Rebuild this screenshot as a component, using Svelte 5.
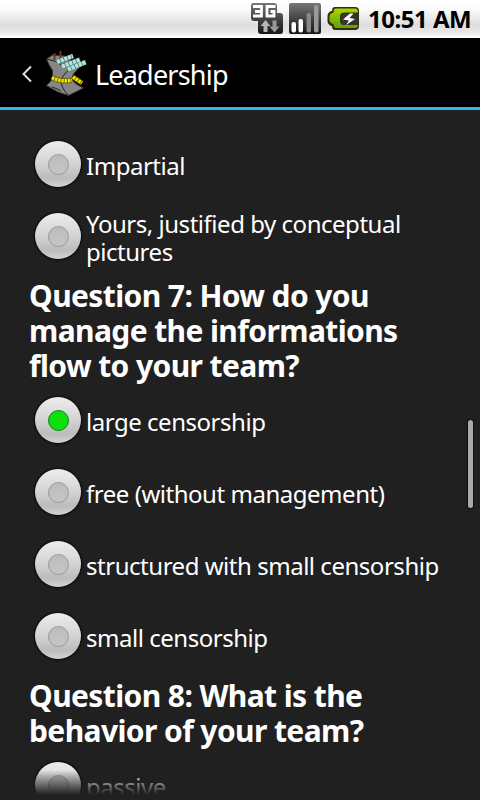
<script>
	const impartial = [
		{ label: ['Impartial'] },
		{ label: ['Yours, justified by conceptual', 'pictures'] }
	];

	const questions = [
		{
			title: ['Question 7: How do you', 'manage the informations', 'flow to your team?'],
			options: [
				{ label: ['large censorship'] },
				{ label: ['free (without management)'] },
				{ label: ['structured with small censorship'] },
				{ label: ['small censorship'] }
			]
		},
		{
			title: ['Question 8: What is the', 'behavior of your team?'],
			options: [{ label: ['passive'] }]
		}
	];

	let selected = 'large censorship';
</script>

{#snippet option(item)}
	<button class="option" on:click={() => (selected = item.label[0])}>
		<span class="radio" class:radio--on={selected === item.label[0]}>
			<span class="radio__dot"></span>
		</span>
		<span class="option__label">
			{#each item.label as line}
				<span class="line">{line}</span>
			{/each}
		</span>
	</button>
{/snippet}

<div class="screen">
	<div class="status">
		<svg class="status__icons" width="110" height="38" viewBox="250 0 110 38">
			<defs>
				<linearGradient id="dark" x1="0" y1="0" x2="0" y2="1">
					<stop offset="0" stop-color="#777" />
					<stop offset=".5" stop-color="#444" />
					<stop offset="1" stop-color="#151515" />
				</linearGradient>
				<linearGradient id="green" x1="0" y1="0" x2="0" y2="1">
					<stop offset="0" stop-color="#a5d800" />
					<stop offset="1" stop-color="#65a000" />
				</linearGradient>
			</defs>
			<path
				d="M253 3h21q3 0 3 3v7h3q3 0 3 3v15q0 3-3 3h-19q-3 0-3-3v-10h-4q-3 0-3-3v-12q0-3 2-3z"
				fill="url(#dark)"
			/>
			<!-- 3G -->
			<path
				d="M253 6.500h8.500v9.500h-8.500M255 11.500h6.500M275.500 6.500h-8.500v9.500h7v-4.500h-3.500"
				fill="none"
				stroke="#fff"
				stroke-width="2.800"
			/>
			<path d="M265.500 20l5 6h-3v6h-4v-6h-3z" fill="#b5b5b5" />
			<path d="M274.500 32.500l5-6h-3v-6h-4v6h-3z" fill="#999" />
			<rect x="289" y="3" width="32" height="31" rx="2" fill="url(#dark)" />
			<rect x="291.500" y="22" width="4.500" height="10.500" rx="2" fill="#fff" />
			<rect x="298.500" y="19" width="4.500" height="13.500" rx="2" fill="#fff" />
			<rect x="306.500" y="13" width="4.500" height="19.500" rx="2" fill="#888" />
			<rect x="314" y="5" width="4.500" height="27.500" rx="2" fill="#999" />
			<path
				d="M335 7h20q4 0 4 4v15q0 4-4 4h-20q-3 0-3-4h-1q-3.500-2-3.500-5v-5q0-3 3.500-5h1q0-4 3-4z"
				fill="#2b3013"
			/>
			<path
				d="M336 8.500h19q3 0 3 4h-13q-5 0-5 4v4.500q0 4 5 4h13q0 3-3 3h-19q-2 0-2.500-4q-4-1-4-4v-3.500q0-3 4-4q0-4 2.500-4z"
				fill="url(#green)"
			/>
			<rect x="341" y="13" width="17" height="12" rx="2" fill="#39332f" />
			<path d="M350 13.500l-7 6 6 1-3 4.500 9-6-5.500-1 4-4.500z" fill="#fff" />
		</svg>
		<span class="status__time">10:51 AM</span>
	</div>

	<div class="header">
		<svg class="header__back" width="12" height="20" viewBox="0 0 12 20">
			<path d="M11 2.500L3.500 10l7.500 7.500" fill="none" stroke="#ddd" stroke-width="2" />
		</svg>
		<svg class="header__logo" width="44" height="48" viewBox="44 50 44 48">
			<path
				d="M46.500 59l6-4 12 1 10 8 6 2-7 8-2 5q3 5 12 9-8 4-15 7.500-10-2-22-10 6-5 6-9v-6q-4-6-6-11.500z"
				fill="#858585"
				stroke="#333"
			/>
			<path
				d="M46.500 59l8 2 7 4M74 67q-9 4-13 13 0 8 7 15M52 87q6 2 9 4"
				fill="none"
				stroke="#222"
			/>
			<path d="M54.500 60v-7M60.500 58v-7" fill="none" stroke="#6d3516" stroke-width="2" />
			<path
				d="M57 62l16-6M62 66.500l18-7M68 69.500l18-7.500"
				fill="none"
				stroke="#446360"
				stroke-width="5"
			/>
			<path
				d="M57 62l16-6M62 66.500l18-7M68 69.500l18-7.500"
				fill="none"
				stroke="#b3e4df"
				stroke-width="4.200"
				stroke-dasharray="3.200 .7"
			/>
			<path d="M52 77.500q9 5 20 2.500M73 77l9 6" fill="none" stroke="#5c5500" stroke-width="5" />
			<path
				d="M52 77.500q9 5 20 2.500M73 77l9 6"
				fill="none"
				stroke="#f2e500"
				stroke-width="3.600"
				stroke-dasharray="2.500 .8"
			/>
		</svg>
		<span class="header__title">Leadership</span>
	</div>

	<div class="content">
		{#each impartial as item}
			{@render option(item)}
		{/each}

		{#each questions as question}
			<h2 class="question">
				{#each question.title as line}
					<span class="line">{line}</span>
				{/each}
			</h2>
			{#each question.options as item}
				{@render option(item)}
			{/each}
		{/each}

		<div class="content__fade"></div>
		<div class="content__scrollbar"></div>
	</div>
</div>

<style>
	:global(body) {
		background: #202020;
	}

	.screen {
		display: flex;
		flex-direction: column;
		width: 480px;
		height: 800px;
		overflow: hidden;
		background: #202020;
		color: #fff;
		font-family: 'Noto Sans', 'Open Sans', sans-serif;
	}

	.line {
		display: block;
		white-space: nowrap;
	}

	.status {
		display: flex;
		flex: none;
		justify-content: flex-end;
		align-items: center;
		height: 38px;
		background: linear-gradient(#fff, #fafafa 25%, #dedede 65%, #e7e7e7 85%, #fff);
		color: #000;
	}

	.status__icons {
		flex: none;
	}

	.status__time {
		width: 120px;
		padding-left: 8px;
		box-sizing: border-box;
		font-size: 24px;
		font-weight: 700;
		line-height: 38px;
		letter-spacing: -0.5px;
		white-space: nowrap;
	}

	.header {
		display: flex;
		flex: none;
		align-items: center;
		height: 72px;
		box-sizing: border-box;
		padding: 3px 0 0 20px;
		border-bottom: 3px solid #33b5e5;
		background: #000;
	}

	.header__logo {
		margin-left: 12px;
	}

	.header__title {
		margin-left: 7px;
		font-size: 27px;
		letter-spacing: -0.8px;
	}

	.content {
		position: relative;
		flex: 1;
		min-height: 0;
		padding-top: 18px;
		overflow: hidden;
	}

	.option {
		display: flex;
		align-items: center;
		width: 100%;
		height: 72px;
		padding: 0 0 0 35px;
		border: 0;
		background: none;
		color: inherit;
		font: inherit;
		text-align: left;
	}

	.option__label {
		padding-top: 4px;
		margin-left: 5px;
		font-size: 24px;
		line-height: 28px;
		letter-spacing: -0.47px;
	}

	.radio {
		display: flex;
		flex: none;
		align-items: center;
		justify-content: center;
		width: 46px;
		height: 46px;
		border-radius: 50%;
		background: linear-gradient(#ececec, #d4d4d4 50%, #bcbcbc 80%, #d2d2d2);
		box-shadow: 0 0 2px 1px #080808;
	}

	.radio__dot {
		width: 21px;
		height: 21px;
		box-sizing: border-box;
		border: 1px solid #999;
		border-radius: 50%;
		background: linear-gradient(#bcbcbc, #c6c6c6);
	}

	.radio--on .radio__dot {
		border-color: #147d14;
		background: #0de00d;
	}

	.question {
		margin: 0;
		padding: 6px 0 1px 29px;
		font-size: 30px;
		font-weight: 700;
		line-height: 35px;
		letter-spacing: -0.6px;
	}

	.content__fade {
		position: absolute;
		right: 0;
		bottom: 0;
		left: 0;
		height: 30px;
		background: linear-gradient(rgba(32, 32, 32, 0), #202020 83%);
	}

	.content__scrollbar {
		position: absolute;
		top: 310px;
		right: 7px;
		width: 5px;
		height: 88px;
		border-radius: 3px;
		background: #aaa;
		box-shadow: 0 0 1px 1px #101010;
	}
</style>
